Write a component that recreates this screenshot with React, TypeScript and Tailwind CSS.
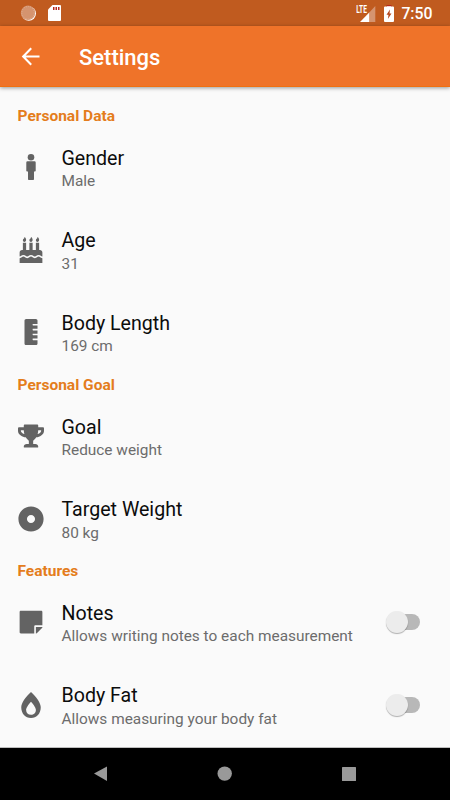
import type { ComponentType } from 'react'
import {
  FaBirthdayCake,
  FaBurn,
  FaDotCircle,
  FaRulerVertical,
  FaStickyNote,
  FaTrophy,
} from 'react-icons/fa'

type Setting = {
  icon: ComponentType<{ className?: string }>
  title: string
  summary: string
  toggle?: boolean
}

function PersonIcon({ className }: { className?: string }) {
  return (
    <svg className={className} viewBox="0 0 26 26" fill="currentColor">
      <circle cx="13" cy="3.3" r="3.3" />
      <path d="M9.5 7.2h7a1.2 1.2 0 0 1 1.2 1.2v8.3a.8.8 0 0 1-.8.8H16v7.7a.8.8 0 0 1-.8.8h-4.4a.8.8 0 0 1-.8-.8v-7.7h-.9a.8.8 0 0 1-.8-.8V8.4a1.2 1.2 0 0 1 1.2-1.2z" />
    </svg>
  )
}

const SECTIONS: { title: string; items: Setting[] }[] = [
  {
    title: 'Personal Data',
    items: [
      { icon: PersonIcon, title: 'Gender', summary: 'Male' },
      { icon: FaBirthdayCake, title: 'Age', summary: '31' },
      { icon: FaRulerVertical, title: 'Body Length', summary: '169 cm' },
    ],
  },
  {
    title: 'Personal Goal',
    items: [
      { icon: FaTrophy, title: 'Goal', summary: 'Reduce weight' },
      { icon: FaDotCircle, title: 'Target Weight', summary: '80 kg' },
    ],
  },
  {
    title: 'Features',
    items: [
      { icon: FaStickyNote, title: 'Notes', summary: 'Allows writing notes to each measurement', toggle: true },
      { icon: FaBurn, title: 'Body Fat', summary: 'Allows measuring your body fat', toggle: true },
    ],
  },
]

function StatusBar() {
  return (
    <div className="flex h-[26px] shrink-0 items-center bg-[#c05b1f] pr-[17.5px] pl-[20px] text-white">
      <svg className="size-4" viewBox="0 0 16 16">
        <circle cx="8.8" cy="8.6" r="7.2" fill="#fff" />
        <circle cx="8" cy="7.8" r="7.2" fill="#d5946f" />
        <circle cx="8" cy="7.8" r="6.2" fill="none" stroke="#e0ae92" strokeWidth="1" strokeDasharray="1 1.2" />
      </svg>
      <svg className="ml-3 h-4 w-[13px]" viewBox="0 0 13 16">
        <path d="M4.5 0H12a1 1 0 0 1 1 1v14a1 1 0 0 1-1 1H1a1 1 0 0 1-1-1V4.5z" fill="#fff" />
        <path d="M5 2h1.5v3H5zM7.5 2H9v3H7.5zM10 2h1.5v3H10z" fill="#b5281c" />
      </svg>
      <div className="ml-auto flex items-center">
        <svg className="h-[17px] w-5" viewBox="0 0 20 17">
          <path d="M13.5 7.2V17H4z" fill="#fff" />
          <path d="M13.5 7.2 19.3 1v16h-5.8z" fill="#d5946f" />
          <text x="0.3" y="8.2" fontSize="10" fontWeight="700" textLength="10.6" lengthAdjust="spacingAndGlyphs" fill="#fff">
            LTE
          </text>
        </svg>
        <svg className="ml-2 h-[17px] w-[10px]" viewBox="0 0 10 17">
          <path d="M1 1.5h2V.2h4v1.3h2a1 1 0 0 1 1 1V16a1 1 0 0 1-1 1H1a1 1 0 0 1-1-1V2.5a1 1 0 0 1 1-1z" fill="#fff" />
          <path d="M2.5 0h5v1.2h-5z" fill="#b5281c" />
          <path d="M6 4.5 2.5 9.8h2L3.9 14 7.5 8.6H5.5z" fill="#b5461c" />
        </svg>
        <span className="ml-[7px] pt-px text-[15.8px] leading-none font-medium">7:50</span>
      </div>
    </div>
  )
}

function AppBar() {
  return (
    <header className="z-10 flex h-[61px] shrink-0 items-center border-b border-[#f07010] bg-[#ef7329] pl-[17px] text-white shadow-[0_1px_4px_rgba(0,0,0,0.4)]">
      <svg className="size-[27px]" viewBox="0 0 24 24" fill="currentColor">
        <path d="M20 11.1H7.7l5.6-5.7L12 4.1l-7.8 7.9 7.8 7.9 1.3-1.3-5.6-5.7H20z" />
      </svg>
      <h1 className="ml-[35px] pt-[4px] text-[22px] leading-none font-medium">Settings</h1>
    </header>
  )
}

function Switch() {
  return (
    <span className="relative mr-[30px] ml-auto h-4 w-[31px] rounded-full bg-[#b8b8b8]">
      <span className="absolute top-[-3px] left-[-3.5px] size-[22px] rounded-full bg-[#ececec] shadow-[0_1px_1px_rgba(0,0,0,0.3)]" />
    </span>
  )
}

function SettingRow({ icon: Icon, title, summary, toggle }: Setting) {
  return (
    <div className="flex h-[82.6px] items-center">
      <Icon className="ml-[17.5px] size-[26px] shrink-0 text-[#636363]" />
      <div className="ml-[18px] pt-[6px]">
        <div className="text-[19.6px] leading-[23.5px] text-[#0c0c0c]">{title}</div>
        <div className="text-[15.4px] leading-[23.5px] text-[#6c6c6c]">{summary}</div>
      </div>
      {toggle && <Switch />}
    </div>
  )
}

function NavBar() {
  return (
    <nav className="z-10 h-[52px] shrink-0 bg-black">
      <svg className="h-[52px] w-full" viewBox="0 0 450 52" fill="#999">
        <path d="M94 25.5 107 18.5v14.5z" />
        <circle cx="224.7" cy="25.6" r="7.2" />
        <rect x="342" y="19" width="14" height="14" rx="0.5" />
      </svg>
    </nav>
  )
}

export default function App() {
  return (
    <div className="flex h-[800px] w-[450px] flex-col overflow-hidden bg-[#fafafa] font-[Roboto,sans-serif]">
      <StatusBar />
      <AppBar />
      <main className="min-h-0 flex-1 overflow-hidden border-b border-[#bdbdbd] pt-[18px]">
        {SECTIONS.map((section) => (
          <section key={section.title}>
            <h2 className="h-[21px] pl-[17.5px] text-[15.5px] leading-[23px] font-bold text-[#e47d1c]">
              {section.title}
            </h2>
            {section.items.map((item) => (
              <SettingRow key={item.title} {...item} />
            ))}
          </section>
        ))}
      </main>
      <NavBar />
    </div>
  )
}
